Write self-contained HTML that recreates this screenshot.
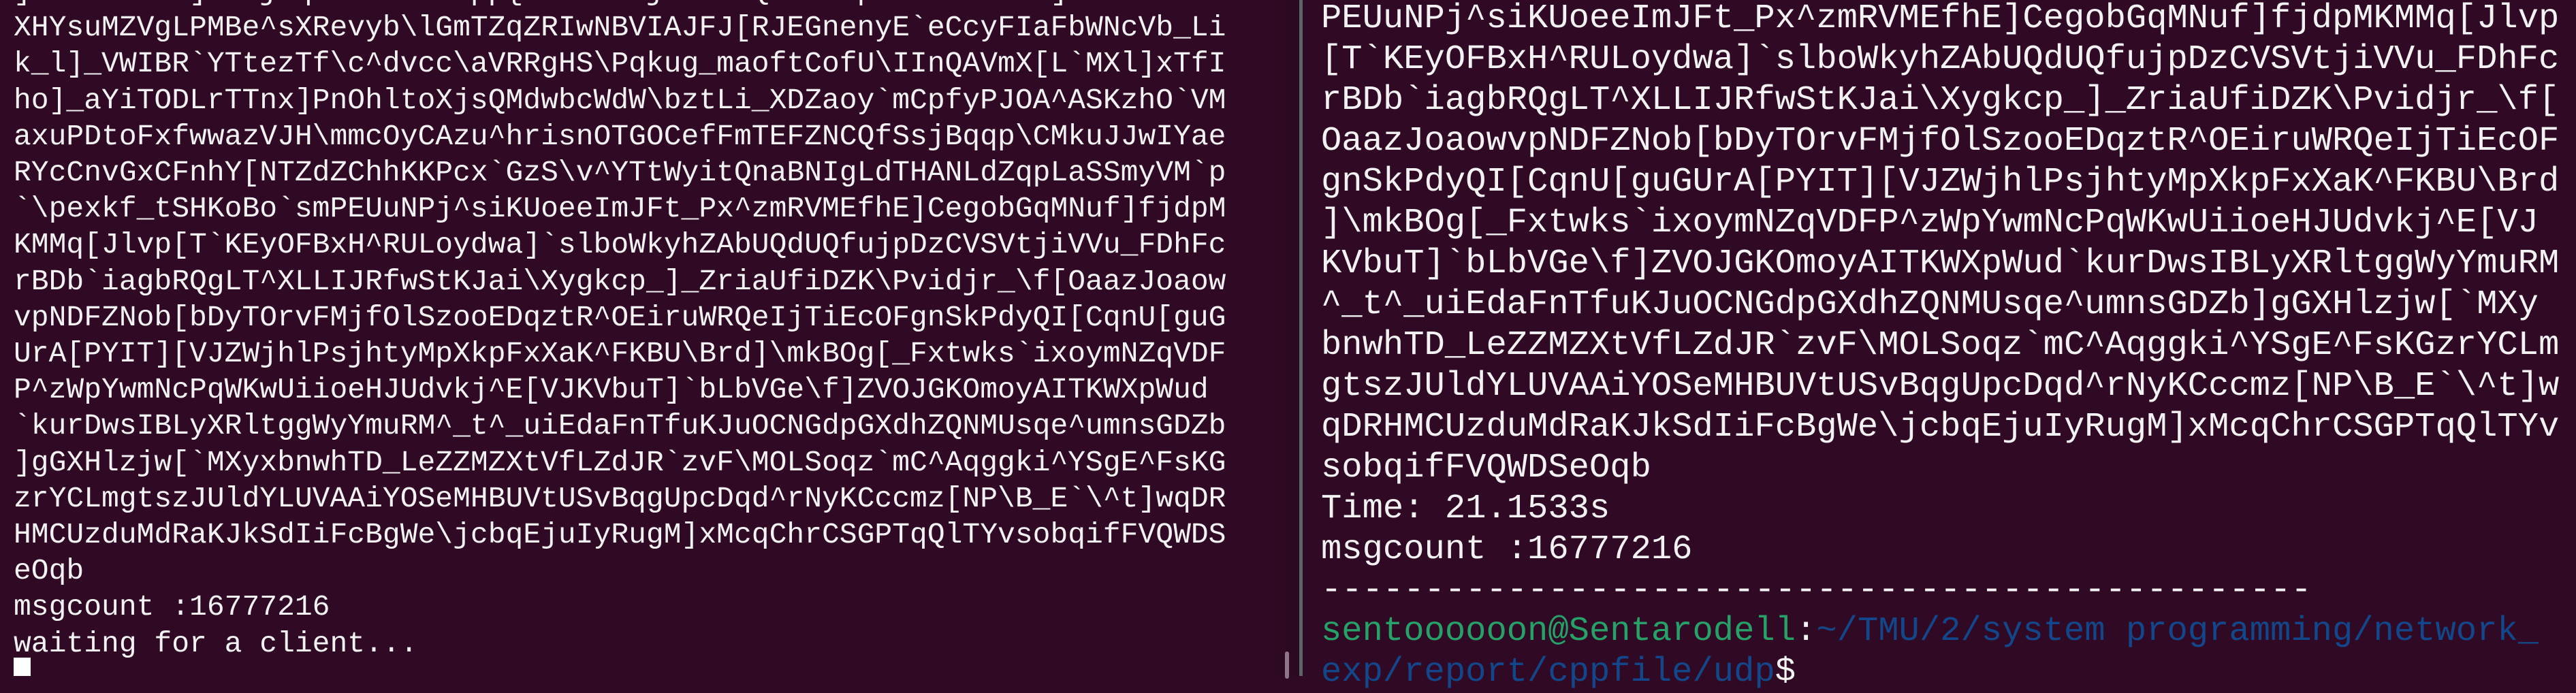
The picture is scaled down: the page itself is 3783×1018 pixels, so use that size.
<!DOCTYPE html>
<html><head><meta charset="utf-8"><style>
html,body{margin:0;padding:0;width:3783px;height:993px;overflow:hidden;background:#300a24;}
.p{position:absolute;margin:0;white-space:pre;color:#f2f2f2;font-family:"Liberation Mono","DejaVu Sans Mono",monospace;}
#l{left:20px;top:-39px;font-size:43px;line-height:53.2px;}
#r{left:1940px;top:-2px;font-size:50.5px;line-height:60px;}
.g{color:#26a269}.b{color:#12488b}
#div{position:absolute;left:1908px;top:0;width:5px;height:993px;background:#5f6566;}
#shade{position:absolute;left:1860px;top:0;width:48px;height:993px;background:linear-gradient(to right,rgba(0,0,0,0),rgba(0,0,0,0.12));}
#thumb{position:absolute;left:1887px;top:957px;width:6px;height:40px;border-radius:3px;background:#8d7688;}
#cur{position:absolute;left:20px;top:966px;width:25px;height:27px;background:#fff;}
</style></head><body>
<div id="shade"></div>
<pre class="p" id="l">]NdYrUmNVL]LLYjAqVAuOeXFEmpp{VE^AXHVjMWkZNQsaYbKpHuBEGrAkWl]^ZFVkRfaoX
XHYsuMZVgLPMBe^sXRevyb\lGmTZqZRIwNBVIAJFJ[RJEGnenyE`eCcyFIaFbWNcVb_Li
k_l]_VWIBR`YTtezTf\c^dvcc\aVRRgHS\Pqkug_maoftCofU\IInQAVmX[L`MXl]xTfI
ho]_aYiTODLrTTnx]PnOhltoXjsQMdwbcWdW\bztLi_XDZaoy`mCpfyPJOA^ASKzhO`VM
axuPDtoFxfwwazVJH\mmcOyCAzu^hrisnOTGOCefFmTEFZNCQfSsjBqqp\CMkuJJwIYae
RYcCnvGxCFnhY[NTZdZChhKKPcx`GzS\v^YTtWyitQnaBNIgLdTHANLdZqpLaSSmyVM`p
`\pexkf_tSHKoBo`smPEUuNPj^siKUoeeImJFt_Px^zmRVMEfhE]CegobGqMNuf]fjdpM
KMMq[Jlvp[T`KEyOFBxH^RULoydwa]`slboWkyhZAbUQdUQfujpDzCVSVtjiVVu_FDhFc
rBDb`iagbRQgLT^XLLIJRfwStKJai\Xygkcp_]_ZriaUfiDZK\Pvidjr_\f[OaazJoaow
vpNDFZNob[bDyTOrvFMjfOlSzooEDqztR^OEiruWRQeIjTiEcOFgnSkPdyQI[CqnU[guG
UrA[PYIT][VJZWjhlPsjhtyMpXkpFxXaK^FKBU\Brd]\mkBOg[_Fxtwks`ixoymNZqVDF
P^zWpYwmNcPqWKwUiioeHJUdvkj^E[VJKVbuT]`bLbVGe\f]ZVOJGKOmoyAITKWXpWud
`kurDwsIBLyXRltggWyYmuRM^_t^_uiEdaFnTfuKJuOCNGdpGXdhZQNMUsqe^umnsGDZb
]gGXHlzjw[`MXyxbnwhTD_LeZZMZXtVfLZdJR`zvF\MOLSoqz`mC^Aqggki^YSgE^FsKG
zrYCLmgtszJUldYLUVAAiYOSeMHBUVtUSvBqgUpcDqd^rNyKCccmz[NP\B_E`\^t]wqDR
HMCUzduMdRaKJkSdIiFcBgWe\jcbqEjuIyRugM]xMcqChrCSGPTqQlTYvsobqifFVQWDS
eOqb
msgcount :16777216
waiting for a client...</pre>
<div id="cur"></div>
<div id="thumb"></div>
<div id="div"></div>
<pre class="p" id="r">PEUuNPj^siKUoeeImJFt_Px^zmRVMEfhE]CegobGqMNuf]fjdpMKMMq[Jlvp
[T`KEyOFBxH^RULoydwa]`slboWkyhZAbUQdUQfujpDzCVSVtjiVVu_FDhFc
rBDb`iagbRQgLT^XLLIJRfwStKJai\Xygkcp_]_ZriaUfiDZK\Pvidjr_\f[
OaazJoaowvpNDFZNob[bDyTOrvFMjfOlSzooEDqztR^OEiruWRQeIjTiEcOF
gnSkPdyQI[CqnU[guGUrA[PYIT][VJZWjhlPsjhtyMpXkpFxXaK^FKBU\Brd
]\mkBOg[_Fxtwks`ixoymNZqVDFP^zWpYwmNcPqWKwUiioeHJUdvkj^E[VJ
KVbuT]`bLbVGe\f]ZVOJGKOmoyAITKWXpWud`kurDwsIBLyXRltggWyYmuRM
^_t^_uiEdaFnTfuKJuOCNGdpGXdhZQNMUsqe^umnsGDZb]gGXHlzjw[`MXy
bnwhTD_LeZZMZXtVfLZdJR`zvF\MOLSoqz`mC^Aqggki^YSgE^FsKGzrYCLm
gtszJUldYLUVAAiYOSeMHBUVtUSvBqgUpcDqd^rNyKCccmz[NP\B_E`\^t]w
qDRHMCUzduMdRaKJkSdIiFcBgWe\jcbqEjuIyRugM]xMcqChrCSGPTqQlTYv
sobqifFVQWDSeOqb
Time: 21.1533s
msgcount :16777216
------------------------------------------------
<span class="g">sentoooooon@Sentarodell</span>:<span class="b">~/TMU/2/system programming/network_</span>
<span class="b">exp/report/cppfile/udp</span>$</pre>
</body></html>
